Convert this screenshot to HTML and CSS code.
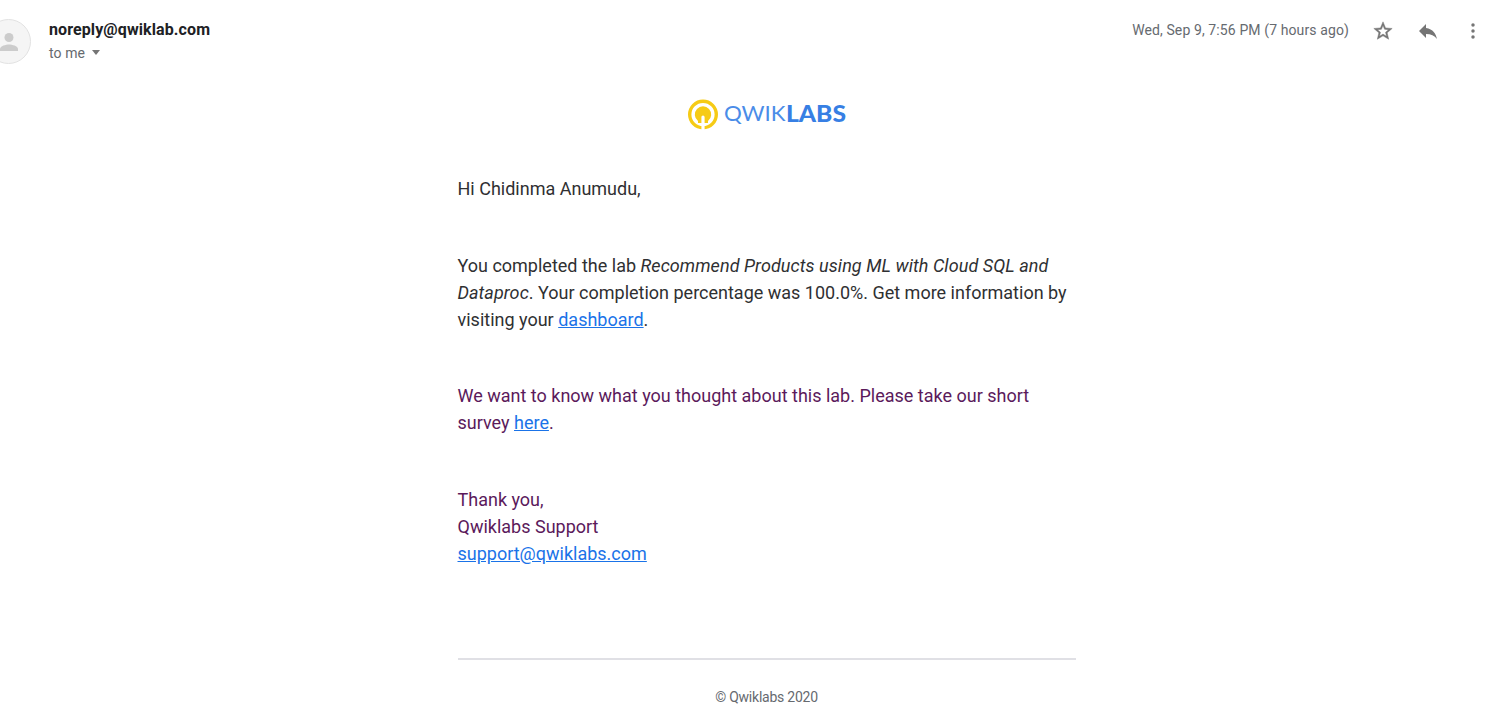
FILE: index.html
```html
<!DOCTYPE html>
<html lang="en">
<head>
<meta charset="utf-8">
<title>Qwiklabs</title>
<link rel="stylesheet" href="styles.css">
</head>
<body>
<header class="header">
  <div class="avatar">
    <svg width="18" height="18" viewBox="0 0 18 18"><circle cx="9" cy="4.500" r="4.500"/><path d="M0 18v-2.200C0 12.900 6 11.400 9 11.400s9 1.500 9 4.400V18z"/></svg>
  </div>
  <div class="sender">
    <div class="address">noreply@qwiklab.com</div>
    <div class="recipient"><span>to me</span><i class="caret"></i></div>
  </div>
  <time class="date">Wed, Sep 9, 7:56 PM (7 hours ago)</time>
  <div class="actions">
    <svg class="star" width="22" height="22" viewBox="0 0 24 24"><path d="M22 9.240l-7.190-.62L12 2 9.190 8.630 2 9.240l5.460 4.730L5.820 21 12 17.270 18.180 21l-1.630-7.030L22 9.240zM12 15.400l-3.760 2.270 1-4.280-3.320-2.880 4.380-.38L12 6.100l1.710 4.040 4.380.38-3.320 2.880 1 4.280L12 15.400z"/></svg>
    <svg width="24" height="24" viewBox="0 0 24 24"><path d="M10 9V5l-7 7 7 7v-4.100c5 0 8.500 1.600 11 5.100-1-5-4-10-11-11z"/></svg>
    <svg width="22" height="22" viewBox="0 0 24 24"><circle cx="12" cy="5.500" r="1.900"/><circle cx="12" cy="12" r="1.900"/><circle cx="12" cy="18.500" r="1.900"/></svg>
  </div>
</header>
<main class="message">
  <div class="logo">
    <svg width="160" height="32" viewBox="0 0 160 32">
      <circle class="logo-ring" cx="16" cy="16.500" r="13.300"/>
      <path class="logo-disc" d="M11 23A8.200 8.200 0 1 1 21 23V25H11z"/>
      <path class="logo-slot" d="M14.400 32V19a1.600 1.600 0 0 1 3.200 0v13z"/>
      <text class="logo-thin" x="37" y="23.400" textLength="61.500" lengthAdjust="spacingAndGlyphs">QWIK</text>
      <text class="logo-bold" x="99" y="23.600" textLength="60" lengthAdjust="spacingAndGlyphs">LABS</text>
    </svg>
  </div>
  <p>Hi Chidinma Anumudu,</p>
  <p>You completed the lab <em>Recommend Products using ML with Cloud SQL and Dataproc</em>. Your completion percentage was 100.0%. Get more information by visiting your <a href="#">dashboard</a>.</p>
  <p class="quoted">We want to know what you thought about this lab. Please take our short survey <a href="#">here</a>.</p>
  <p class="quoted">Thank you,<br>Qwiklabs Support<br><a href="#">support@qwiklabs.com</a></p>
  <footer class="footer">© Qwiklabs 2020</footer>
</main>
</body>
</html>
```
FILE: styles.css
```css
body {
  margin: 0;
  background: #fff;
  font-family: Roboto, "Liberation Sans", sans-serif;
  overflow: hidden;
}
.header {
  display: flex;
  align-items: flex-start;
  height: 98px;
  color: #666a6f;
}
.avatar {
  box-sizing: border-box;
  flex: none;
  width: 45px;
  height: 45px;
  margin: 19px 18px 0 -14px;
  border: 1px solid #e2e2e2;
  border-radius: 50%;
  background: #f5f5f5;
  display: flex;
  align-items: center;
  justify-content: center;
}
.avatar svg { fill: #ccc; }
.sender { flex: 1; padding-top: 18px; }
.address {
  color: #202124;
  font-size: 16px;
  font-weight: 700;
  letter-spacing: 0.1px;
  line-height: 24px;
}
.recipient {
  display: flex;
  align-items: center;
  font-size: 14px;
  letter-spacing: 0.1px;
  line-height: 22px;
}
.caret {
  margin: -2px 0 0 7px;
  border: 4.500px solid transparent;
  border-top: 5px solid #757575;
  border-bottom: 0;
}
.date {
  padding-top: 20px;
  font-size: 14px;
  letter-spacing: 0.11px;
  line-height: 20px;
}
.actions {
  display: flex;
  align-items: center;
  gap: 22px;
  height: 24px;
  margin: 18.500px 12px 0 23px;
}
.actions svg { fill: #757575; }
.actions .star { stroke: #757575; stroke-width: 0.5; }
.message {
  width: 618px;
  margin-left: 458px;
  color: #2f3032;
  font-size: 18px;
  line-height: 27px;
}
.logo {
  display: flex;
  justify-content: center;
  height: 77px;
}
.logo-ring { fill: none; stroke: #f6cb15; stroke-width: 3.400; }
.logo-disc { fill: #f6cb15; }
.logo-slot { fill: #fff; }
.logo-thin, .logo-bold {
  fill: #377fe4;
  font-family: Lato, sans-serif;
  font-size: 21.800px;
}
.logo-thin { font-weight: 400; fill: #4a8ce8; }
.logo-bold { font-weight: 900; }
.message p { margin: 0 0 49.700px -0.500px; }
.message em { letter-spacing: 0.065px; }
.message .quoted { color: #5b1a5b; }
.message a { color: #1a73e8; text-decoration: underline; }
.footer {
  margin-top: 91px;
  padding-top: 27px;
  border-top: 2px solid #e0e0e5;
  color: #666a6f;
  font-size: 14px;
  letter-spacing: -0.24px;
  line-height: 21px;
  text-align: center;
  text-indent: -1px;
}
```
